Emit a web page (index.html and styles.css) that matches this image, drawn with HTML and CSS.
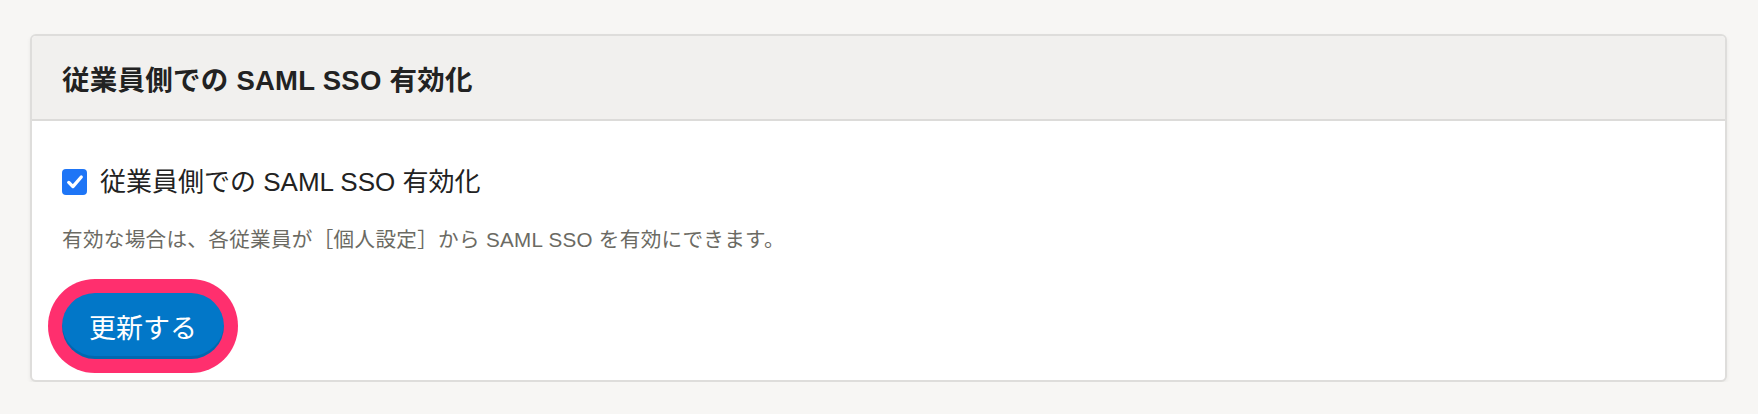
FILE: index.html
```html
<!DOCTYPE html>
<html lang="ja">
<head>
<meta charset="utf-8">
<title>SAML SSO</title>
<link rel="stylesheet" href="styles.css">
</head>
<body>
<section class="card">
  <header class="card-header">
    <h2 class="card-title">従業員側での SAML SSO 有効化</h2>
  </header>
  <div class="card-body">
    <label class="check-row">
      <span class="checkbox">
        <svg viewBox="0 0 24 24" width="20" height="20" aria-hidden="true"><path d="M4.5 12.5 L9.5 17.5 L19.5 6" fill="none" stroke="#fff" stroke-width="4" stroke-linecap="round" stroke-linejoin="round"/></svg>
      </span>
      <span class="check-label">従業員側での SAML SSO 有効化</span>
    </label>
    <p class="help">有効な場合は、各従業員が［個人設定］から SAML SSO を有効にできます。</p>
    <div class="actions">
      <button class="btn" type="button">更新する</button>
    </div>
  </div>
</section>
</body>
</html>
```

FILE: styles.css
```css
* { box-sizing: border-box; }
html, body { margin: 0; }
body {
  background: #f7f6f4;
  padding: 34px 31px 0 30px;
  font-family: "Liberation Sans", "Noto Sans CJK JP", sans-serif;
  color: #222;
}
.card {
  background: #fff;
  border: 2px solid #dedddb;
  border-radius: 6px;
  box-shadow: 0 2px 4px rgba(0,0,0,0.06);
  overflow: hidden;
}
.card-header {
  background: #f1f0ee;
  height: 85px;
  border-bottom: 2px solid #dcdbd9;
  display: flex;
  align-items: center;
  padding: 0 30px;
}
.card-title {
  margin: 0;
  font-size: 27.5px;
  font-weight: 700;
  letter-spacing: 0.25px;
  color: #222;
}
.card-body {
  padding: 43px 30px 21px 30px;
}
.check-row {
  display: flex;
  align-items: center;
  height: 36px;
  gap: 13px;
}
.checkbox {
  width: 25px;
  height: 26px;
  border-radius: 4px;
  background: #1e75f6;
  display: flex;
  align-items: center;
  justify-content: center;
}
.check-label {
  font-size: 26px;
  line-height: 36px;
  color: #222;
}
.help {
  margin: 25px 0 0 0;
  font-size: 20.6px;
  line-height: 30px;
  letter-spacing: 0.3px;
  color: #6b6a63;
}
.actions {
  margin-top: 38px;
  display: flex;
}
.btn {
  width: 162px;
  height: 66px;
  border: none;
  border-radius: 33px;
  background: #0277c8;
  color: #fff;
  font-family: "Liberation Sans", "Noto Sans CJK JP", sans-serif;
  font-size: 27px;
  padding: 0;
  box-shadow: inset 0 -3px 0 rgba(0,0,0,0.12), 0 0 0 14px #ff2f6e;
}
```
